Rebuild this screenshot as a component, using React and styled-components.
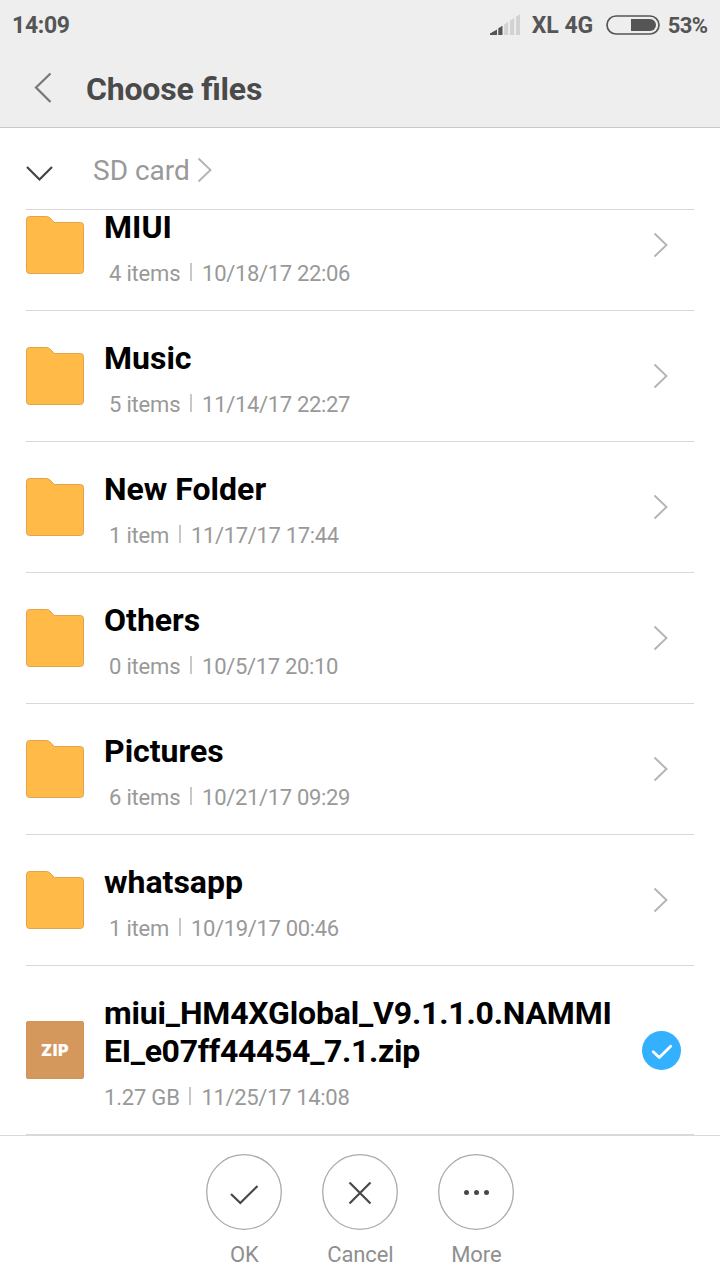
import React from 'react';
import styled, { createGlobalStyle } from 'styled-components';

const GlobalStyle = createGlobalStyle`
  * { box-sizing: border-box; }
  body { margin: 0; background: #fff; font-family: Roboto, sans-serif; }
`;

const Screen = styled.div`
  width: 720px;
  height: 1280px;
  display: flex;
  flex-direction: column;
  overflow: hidden;
  background: #fff;
`;

const Header = styled.header`
  height: 128px;
  background: #eee;
  border-bottom: 1px solid #c8c8c8;
`;

const StatusBar = styled.div`
  height: 50px;
  padding: 0 13px 0 12px;
  display: flex;
  align-items: center;
  color: #555;
  font-size: 23px;
  font-weight: 700;
  white-space: nowrap;
`;

const Clock = styled.span`
  flex: 1;
  letter-spacing: -0.3px;
`;

const Carrier = styled.span`
  margin: 0 13px 0 11px;
`;

const Percent = styled.span`
  margin-left: 7.5px;
  margin-right: -0.5px;
  font-size: 22px;
  letter-spacing: -0.6px;
`;

const TitleBar = styled.div`
  height: 76px;
  display: flex;
  align-items: center;
  padding-left: 34px;
`;

const PageTitle = styled.h1`
  margin: 1px 0 0 34px;
  color: #4a4a4a;
  font-size: 32px;
  font-weight: 700;
  letter-spacing: -0.2px;
  font-feature-settings: "liga" 1;
`;

const Breadcrumb = styled.nav`
  flex: none;
  height: 82px;
  margin: 0 26px;
  border-bottom: 1px solid #d9d9d9;
  display: flex;
  align-items: center;
  color: #999;
  font-size: 28px;
  padding-top: 4px;
`;

const Expand = styled.svg`
  margin-top: 6px;
`;

const Crumb = styled.span`
  margin: 0 7.5px 0 39px;
`;

const CrumbArrow = styled.span`
  display: flex;
  margin-bottom: 2px;
`;

const List = styled.main`
  flex: none;
  height: 955px;
  margin-top: -30px;
  padding: 0 26px;
`;

const Row = styled.div`
  height: ${(p) => (p.$tall ? 169 : 131)}px;
  border-bottom: 1px solid #d9d9d9;
  display: flex;
  align-items: center;
`;

const Details = styled.div`
  width: 530px;
  margin: 4.5px auto 0 20px;
`;

const Name = styled.div`
  color: #000;
  font-size: 32px;
  line-height: 38px;
  font-weight: 700;
  white-space: nowrap;
  letter-spacing: ${(p) => p.$spacing || 0}px;
`;

const Meta = styled.div`
  height: 26px;
  margin-top: 14.5px;
  padding-left: ${(p) => (p.$indent ? 5 : 0)}px;
  display: flex;
  align-items: center;
  color: #999;
  font-size: 22px;
  line-height: 26px;
  letter-spacing: -0.2px;
  white-space: nowrap;
`;

const Modified = styled.span`
  letter-spacing: -0.33px;
`;

const Divider = styled.span`
  width: 2px;
  height: 18px;
  margin: 0 10px 4px 9.8px;
  background: #c8c8c8;
`;

const ZipBadge = styled.div`
  width: 58px;
  height: 58px;
  border-radius: 2px;
  border: 1px solid #d19358;
  background: #d4975c;
  color: #fff;
  display: flex;
  align-items: center;
  justify-content: center;
  font-family: Inter, sans-serif;
  font-size: 16px;
  font-weight: 900;
  letter-spacing: 0.5px;
`;

const RowChevron = styled.span`
  display: flex;
  margin-right: 25px;
`;

const Selected = styled.svg`
  margin-right: 13px;
`;

const Footer = styled.footer`
  flex: none;
  height: 145px;
  padding-top: 18px;
  border-top: 1px solid #d9d9d9;
  display: flex;
  justify-content: center;
  gap: 40px;
`;

const Action = styled.button`
  width: 76px;
  padding: 0;
  border: 0;
  background: none;
  display: flex;
  flex-direction: column;
  align-items: center;
  color: #8f8f8f;
  font: 22px/26px Roboto, sans-serif;
`;

const ActionLabel = styled.span`
  margin-top: 12px;
  padding-left: 0.7px;
  letter-spacing: -0.1px;
`;

const Signal = () => (
  <svg width="31" height="22" viewBox="0 0 31 22">
    <path d="M0 21V19.500L7 15.500V21Z M8.300 21V14.200L12.500 11.800V21Z" fill="#555" />
    <path d="M14.200 21V10.400L18.200 7.800V21Z M20 21V6.700L24.200 4V21Z M26 21V2.800L30 .2V21Z" fill="#d2d2d2" />
  </svg>
);

const Battery = () => (
  <svg width="54" height="20" viewBox="0 0 54 20">
    <rect x="1" y="1" width="52" height="18" rx="9" fill="none" stroke="#555" strokeWidth="1.700" />
    <path d="M25 4H44A6 6 0 0 1 44 16H25Z" fill="#555" />
  </svg>
);

const Chevron = () => (
  <svg width="16" height="26" viewBox="0 0 16 26">
    <path d="M1.500 1.500L13.500 13L1.500 24.500" fill="none" stroke="#b4b4b4" strokeWidth="1.900" />
  </svg>
);

const Folder = () => (
  <svg width="58" height="58" viewBox="0 0 58 58">
    <path
      d="M3.500 .5H20.500Q22.500 .5 24 2L28.300 6.500H54.500Q57.500 6.500 57.500 9.500V54.500Q57.500 57.500 54.500 57.500H3.500Q.5 57.500 .5 54.500V3.500Q.5 .5 3.500 .5Z"
      fill="#ffba47"
      stroke="#e2a34c"
    />
  </svg>
);

const glyphs = {
  ok: <path d="M25 40L34.300 49L51.500 32" fill="none" stroke="#484848" strokeWidth="2.200" />,
  cancel: <path d="M27.500 28.500L48.500 49.500M48.500 28.500L27.500 49.500" fill="none" stroke="#484848" strokeWidth="2.200" />,
  more: (
    <g fill="#484848">
      <circle cx="28.500" cy="38.500" r="2.500" />
      <circle cx="38.500" cy="38.500" r="2.500" />
      <circle cx="48.500" cy="38.500" r="2.500" />
    </g>
  ),
};

const folders = [
  { name: 'MIUI', count: '4 items', date: '10/18/17 22:06' },
  { name: 'Music', count: '5 items', date: '11/14/17 22:27' },
  { name: 'New Folder', count: '1 item', date: '11/17/17 17:44' },
  { name: 'Others', count: '0 items', date: '10/5/17 20:10' },
  { name: 'Pictures', count: '6 items', date: '10/21/17 09:29' },
  { name: 'whatsapp', count: '1 item', date: '10/19/17 00:46' },
];

const actions = [
  { id: 'ok', label: 'OK' },
  { id: 'cancel', label: 'Cancel' },
  { id: 'more', label: 'More' },
];

export default function App() {
  return (
    <Screen>
      <GlobalStyle />
      <Header>
        <StatusBar>
          <Clock>14:09</Clock>
          <Signal />
          <Carrier>XL 4G</Carrier>
          <Battery />
          <Percent>53%</Percent>
        </StatusBar>
        <TitleBar>
          <svg width="18" height="32" viewBox="0 0 18 32">
            <path d="M16.500 1.500L2 15.500L16.500 30" fill="none" stroke="#777" strokeWidth="2.200" />
          </svg>
          <PageTitle>Choose files</PageTitle>
        </TitleBar>
      </Header>
      <Breadcrumb>
        <Expand width="28" height="16" viewBox="0 0 28 16">
          <path d="M1 1L13.500 13.500L26 1" fill="none" stroke="#444" strokeWidth="2.200" />
        </Expand>
        <Crumb>SD card</Crumb>
        <CrumbArrow>
          <Chevron />
        </CrumbArrow>
      </Breadcrumb>
      <List>
        {folders.map((f) => (
          <Row key={f.name}>
            <Folder />
            <Details>
              <Name>{f.name}</Name>
              <Meta $indent>
                {f.count}
                <Divider />
                <Modified>{f.date}</Modified>
              </Meta>
            </Details>
            <RowChevron>
              <Chevron />
            </RowChevron>
          </Row>
        ))}
        <Row $tall>
          <ZipBadge>ZIP</ZipBadge>
          <Details>
            <Name $spacing={-0.18}>miui_HM4XGlobal_V9.1.1.0.NAMMI</Name>
            <Name $spacing={-0.32}>EI_e07ff44454_7.1.zip</Name>
            <Meta>
              1.27 GB
              <Divider />
              <Modified>11/25/17 14:08</Modified>
            </Meta>
          </Details>
          <Selected width="39" height="39" viewBox="0 0 39 39">
            <circle cx="19.500" cy="19.500" r="19.500" fill="#33b1ff" />
            <path d="M11.200 20.700L17.300 26.600L28.700 15.300" fill="none" stroke="#fff" strokeWidth="2.800" strokeLinecap="round" strokeLinejoin="round" />
          </Selected>
        </Row>
      </List>
      <Footer>
        {actions.map((a) => (
          <Action key={a.id}>
            <svg width="76" height="76" viewBox="0 0 76 76">
              <circle cx="38" cy="38" r="37.300" fill="none" stroke="#aaa" strokeWidth="1.300" />
              {glyphs[a.id]}
            </svg>
            <ActionLabel>{a.label}</ActionLabel>
          </Action>
        ))}
      </Footer>
    </Screen>
  );
}
